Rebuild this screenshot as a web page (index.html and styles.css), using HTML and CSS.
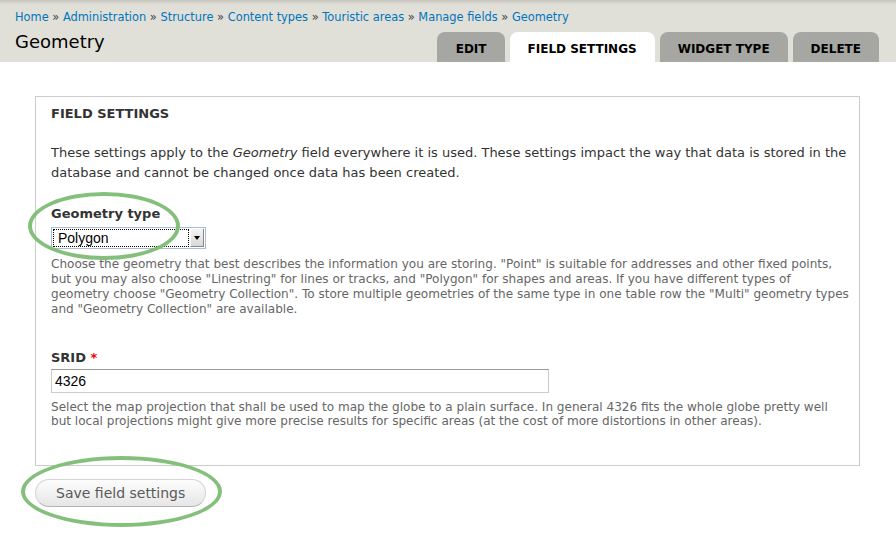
FILE: index.html
```html
<!DOCTYPE html>
<html>
<head>
<meta charset="utf-8">
<link rel="stylesheet" href="styles.css">
</head>
<body>
<div class="header">
  <div class="breadcrumb">
    <a href="#">Home</a> <span class="sep">»</span> <a href="#">Administration</a> <span class="sep">»</span> <a href="#">Structure</a> <span class="sep">»</span> <a href="#">Content types</a> <span class="sep">»</span> <a href="#">Touristic areas</a> <span class="sep">»</span> <a href="#">Manage fields</a> <span class="sep">»</span> <a href="#">Geometry</a>
  </div>
  <div class="title-row">
    <h1 class="title">Geometry</h1>
    <ul class="tabs">
      <li class="tab">Edit</li>
      <li class="tab active">Field settings</li>
      <li class="tab">Widget type</li>
      <li class="tab">Delete</li>
    </ul>
  </div>
</div>
<div class="content">
  <div class="fieldset">
    <div class="legend">Field settings</div>
    <p class="intro">These settings apply to the <span class="em">Geometry</span> field everywhere it is used. These settings impact the way that data is stored in the database and cannot be changed once data has been created.</p>
    <div class="form-item first">
      <div class="label">Geometry type</div>
      <div class="select">
        <span class="select-value">Polygon</span>
        <span class="select-btn"><span class="arrow"></span></span>
      </div>
      <div class="description">Choose the geometry that best describes the information you are storing. "Point" is suitable for addresses and other fixed points, but you may also choose "Linestring" for lines or tracks, and "Polygon" for shapes and areas. If you have different types of geometry choose "Geometry Collection". To store multiple geometries of the same type in one table row the "Multi" geometry types and "Geometry Collection" are available.</div>
      <span class="ring ring-select"></span>
    </div>
    <div class="form-item second">
      <div class="label">SRID <span class="req">*</span></div>
      <div class="input">4326</div>
      <div class="description">Select the map projection that shall be used to map the globe to a plain surface. In general 4326 fits the whole globe pretty well but local projections might give more precise results for specific areas (at the cost of more distortions in other areas).</div>
    </div>
  </div>
  <div class="actions">
    <button class="button">Save field settings</button>
    <span class="ring ring-button"></span>
  </div>
</div>
</body>
</html>
```
FILE: styles.css
```css
html, body {
  margin: 0;
  padding: 0;
  background: #fff;
  font-family: "DejaVu Sans", sans-serif;
  color: #333;
}
.header {
  height: 62px;
  background: #e0e0d8;
  background-image: linear-gradient(to bottom, #c4c4bc 0, #dcdcd4 4px, #e0e0d8 7px);
  padding: 10px 17px 0 15px;
  box-sizing: border-box;
  display: flex;
  flex-direction: column;
}
.breadcrumb {
  font-size: 11.4px;
  line-height: 14px;
  white-space: nowrap;
}
.breadcrumb a {
  color: #0074bd;
  text-decoration: none;
}
.breadcrumb .sep {
  color: #444;
}
.title-row {
  flex: 1;
  display: flex;
  justify-content: space-between;
  align-items: flex-end;
}
.title {
  align-self: flex-start;
  margin: 6px 0 0 0;
  font-size: 18px;
  line-height: 24px;
  font-weight: normal;
  color: #000;
}
.tabs {
  list-style: none;
  margin: 0;
  padding: 0;
  display: flex;
  gap: 5px;
}
.tab {
  height: 30px;
  box-sizing: border-box;
  padding: 3px 18px 0 18px;
  display: flex;
  align-items: center;
  background: #a6a7a2;
  border-radius: 8px 8px 0 0;
  font-size: 12px;
  font-weight: bold;
  text-transform: uppercase;
  color: #000;
}
.tab:first-child {
  padding: 3px 18px 0 19px;
}
.tab.active {
  background: #fff;
}
.content {
  padding: 34px 36px 20px 35px;
}
.fieldset {
  border: 1px solid #ccc;
  padding: 7px 10px 37px 15px;
}
.legend {
  font-size: 13px;
  line-height: 20px;
  font-weight: bold;
  text-transform: uppercase;
  color: #333;
}
.intro {
  margin: 19px 0 0 0;
  font-size: 13px;
  line-height: 20px;
  color: #333;
}
.em {
  font-style: italic;
}
.form-item {
  position: relative;
}
.form-item.first {
  margin-top: 23px;
}
.form-item.second {
  margin-top: 33px;
}
.label {
  font-size: 13px;
  line-height: 16px;
  font-weight: bold;
  color: #333;
  margin-bottom: 5px;
}
.second .label {
  margin-bottom: 3px;
}
.req {
  color: #e00;
}
.select {
  width: 155px;
  height: 22px;
  box-sizing: border-box;
  border: 1px solid #a9bed6;
  background: #fff;
  display: flex;
  align-items: stretch;
  padding: 1px;
}
.select-value {
  flex: 1;
  border: 1px dotted #000;
  font-family: "Liberation Sans", Arial, sans-serif;
  font-size: 14px;
  line-height: 16px;
  padding-left: 4px;
  color: #000;
}
.select-btn {
  width: 12px;
  margin-left: 1px;
  background: linear-gradient(to bottom, #f4f4f4, #d8d8d8);
  border-left: 1px solid #fff;
  border-right: 1px solid #888;
  border-bottom: 1px solid #888;
  display: flex;
  align-items: center;
  justify-content: center;
}
.arrow {
  width: 0;
  height: 0;
  border-left: 3px solid transparent;
  border-right: 3px solid transparent;
  border-top: 4px solid #000;
}
.input {
  width: 498px;
  height: 24px;
  box-sizing: border-box;
  border: 1px solid #ccc;
  border-top-color: #999;
  font-family: "Liberation Sans", Arial, sans-serif;
  font-size: 14px;
  line-height: 22px;
  padding-left: 3px;
  color: #000;
}
.description {
  margin-top: 8px;
  font-size: 12.05px;
  line-height: 15px;
  color: #666;
}
.second .description {
  line-height: 14px;
  margin-top: 7px;
}
.actions {
  position: relative;
  margin-top: 13px;
}
.button {
  font-family: "DejaVu Sans", sans-serif;
  font-size: 14px;
  color: #5a5a5a;
  height: 28px;
  padding: 0 20px;
  border: 1px solid #d4d4d4;
  border-bottom-color: #b4b4b4;
  border-radius: 14px;
  background: linear-gradient(to bottom, #fdfdfd, #e6e6e6);
}
.ring {
  position: absolute;
  border: 4px solid #7dbd74;
  border-radius: 50%;
  box-sizing: border-box;
  pointer-events: none;
  opacity: 0.95;
}
.ring-select {
  left: -23px;
  top: -14px;
  width: 152px;
  height: 68px;
}
.ring-button {
  left: -14px;
  top: -23px;
  width: 201px;
  height: 71px;
}
```
